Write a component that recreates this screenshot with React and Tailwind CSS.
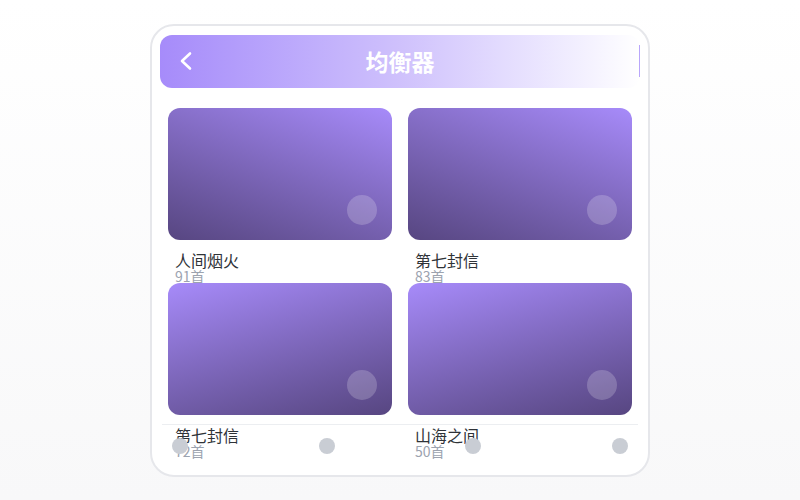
import React from "react";

const playlists = [
  { name: "人间烟火", count: "91首", dir: "bg-linear-200" },
  { name: "第七封信", count: "83首", dir: "bg-linear-200" },
  { name: "第七封信", count: "72首", dir: "bg-linear-165" },
  { name: "山海之间", count: "50首", dir: "bg-linear-165" },
];

function BackIcon() {
  return (
    <svg width="16" height="20" viewBox="0 0 16 20" fill="none">
      <polyline
        points="12,2.5 4,10 12,17.5"
        stroke="white"
        strokeWidth="2.6"
        strokeLinecap="round"
        strokeLinejoin="round"
      />
    </svg>
  );
}

function Card({ item }) {
  return (
    <div className="h-[175px]">
      <div
        className={`relative h-[132px] rounded-xl ${item.dir} from-[#a78bfa] to-[#574681]`}
      >
        <div className="absolute right-[15px] bottom-[15px] w-[30px] h-[30px] rounded-full bg-white/20"></div>
      </div>
      <div className="pl-[7px] pt-[11px]">
        <div className="text-[16px] leading-[18px] text-[#2f3338]">{item.name}</div>
        <div className="text-[14px] leading-[15px] text-[#9ca3af]">{item.count}</div>
      </div>
    </div>
  );
}

export default function App() {
  return (
    <div
      className="w-[800px] h-[500px] flex items-center justify-center bg-gradient-to-b from-white to-[#f8f8f9]"
      style={{ fontFamily: '"Noto Sans CJK SC", "Noto Sans", sans-serif' }}
    >
      <div className="relative w-[500px] h-[453px] rounded-[24px] border-2 border-[#e6e7eb] bg-white overflow-hidden px-[8px] pt-[9px]">
        {/* HEADER */}
        <div className="h-[53px] rounded-xl bg-gradient-to-r from-[#a68bfa] via-[#cfc1fc] to-white grid grid-cols-[1fr_auto_1fr] items-center">
          <div className="pl-[18px] flex items-center">
            <BackIcon />
          </div>
          <h1 className="text-[23px] font-bold text-white leading-none">均衡器</h1>
          <div className="flex justify-end">
            <div className="w-px h-[32px] bg-[#b9a6fb]"></div>
          </div>
        </div>

        {/* PLAYLISTS */}
        <div className="mt-[20px] px-[8px] grid grid-cols-2 gap-x-[16px]">
          {playlists.map((item, i) => (
            <Card key={i} item={item} />
          ))}
        </div>

        {/* BOTTOM BAR */}
        <div className="absolute left-[10px] right-[10px] bottom-0 h-[51px] border-t border-[#eceef1] flex justify-between px-[10px] pt-[13px]">
          {[0, 1, 2, 3].map((i) => (
            <div key={i} className="w-4 h-4 rounded-full bg-[#c9cdd4]"></div>
          ))}
        </div>
      </div>
    </div>
  );
}
